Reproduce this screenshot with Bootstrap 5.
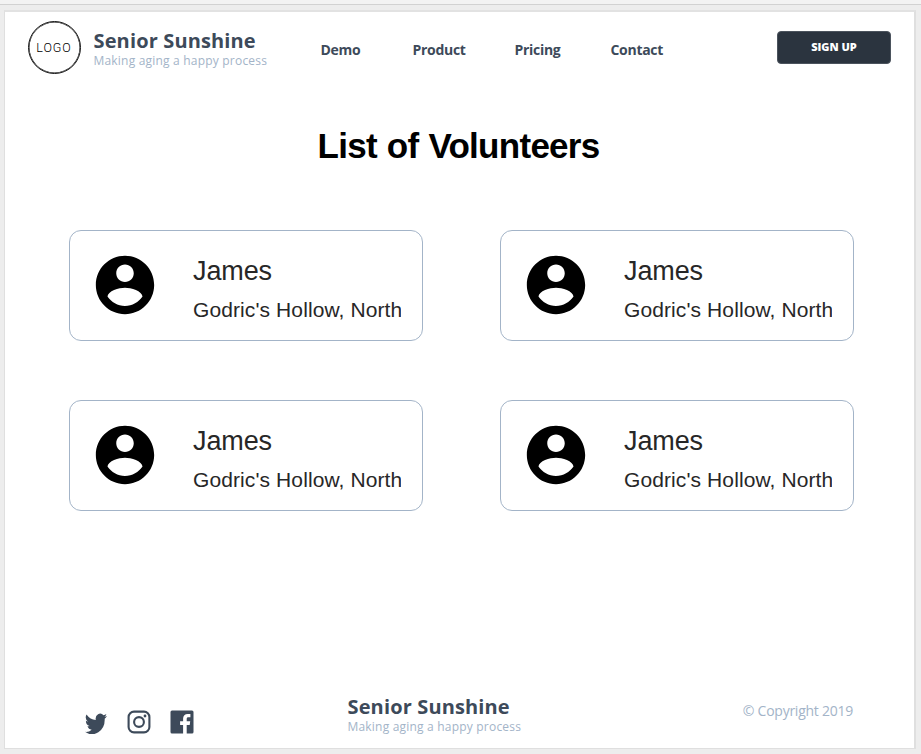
<!DOCTYPE html>
<html lang="en">
<head>
<meta charset="utf-8">
<meta name="viewport" content="width=device-width, initial-scale=1">
<title>Senior Sunshine</title>
<link href="https://cdn.jsdelivr.net/npm/bootstrap@5.3.0/dist/css/bootstrap.min.css" rel="stylesheet">
<style>
  body { background: #ededed; font-family: "Open Sans", sans-serif; color: #3d4a5a; height: 754px; overflow: hidden; }
  .top-strip { height: 5px; background: #f3f3f3; border-bottom: 1px solid #d2d2d2; }
  .page-frame { margin: 5px 5px 0 4px; height: 739px; background: #fff; border: solid #dfdfdf; border-width: 2px 2px 1px 1px; border-top-color: #e2e2e2; }
  .site-header { height: 80px; padding: 9px 23px 0 23px; }
  .logo-disc { width: 53px; height: 53px; border: 1px solid #111; box-shadow: inset 0 0 0 .5px #111; font: 300 12.500px Roboto, sans-serif; letter-spacing: .9px; color: #000; padding-right: 1px; margin-right: 12.500px; }
  .brand-block { width: 227px; padding-top: 9px; }
  .brand-name { font-size: 20px; line-height: 20px; font-weight: 700; letter-spacing: .14px; white-space: nowrap; padding-top: 1px; }
  .brand-line { font-size: 12px; line-height: 16px; color: #a3b4c8; letter-spacing: .2px; white-space: nowrap; padding-top: 2px; }
  .main-links { padding-top: 18px; }
  .main-links a { color: #3d4a5a; font-size: 14px; line-height: 21px; font-weight: 700; letter-spacing: -.3px; }
  .main-links .item-demo { width: 92px; }
  .main-links .item-product { width: 102px; }
  .main-links .item-pricing { width: 96px; }
  .btn-signup { width: 114px; height: 33px; margin-top: 10px; border-radius: 4px; font-size: 11px; font-weight: 800; line-height: 15px; padding-bottom: 2px; background: #2b343f; border: 1px solid #4b535d; color: #fff; }
  .page-title { font: bold 35px/40px "Liberation Sans", Arial, sans-serif; letter-spacing: -.72px; word-spacing: 1px; color: #000; margin: 34px 2px 64px 0; }
  .volunteers { display: grid; grid-template-columns: 354px 354px; gap: 59px 77px; margin-left: 64px; }
  .volunteer { height: 111px; border: 1px solid #a3b4c8; border-radius: 12px; padding: 18.500px 20px 0 20px; font-family: "Liberation Sans", Arial, sans-serif; color: #272727; }
  .volunteer svg { width: 70px; height: 70px; margin-right: 33px; flex: none; }
  .volunteer-name { font-size: 27px; line-height: 32px; margin-top: 5.500px; letter-spacing: -.1px; }
  .volunteer-place { font-size: 21px; line-height: 26px; margin-top: 10px; letter-spacing: .1px; white-space: nowrap; overflow: hidden; width: 208px; }
  .site-footer { padding: 0 61px 0 79px; height: 64px; margin-top: 161px; }
  .socials { gap: 19px; padding-top: 38px; width: 263.500px; }
  .footer-brand { padding-top: 24px; }
  .copyright { font-size: 14px; line-height: 20px; letter-spacing: -.25px; color: #a3b4c8; padding-top: 29px; white-space: nowrap; }
</style>
<script src="https://cdn.jsdelivr.net/npm/bootstrap@5.3.0/dist/js/bootstrap.bundle.min.js"></script>
</head>
<body>
<svg class="d-none"><symbol id="person" viewBox="0 0 24 24"><path d="M12 2C6.480 2 2 6.480 2 12s4.480 10 10 10 10-4.480 10-10S17.520 2 12 2zm0 3c1.660 0 3 1.340 3 3s-1.340 3-3 3-3-1.340-3-3 1.340-3 3-3zm0 14.200c-2.500 0-4.710-1.280-6-3.220.030-1.990 4-3.080 6-3.080 1.990 0 5.970 1.090 6 3.080-1.290 1.940-3.500 3.220-6 3.220z"/></symbol></svg>
<div class="top-strip"></div>
<div class="page-frame">
  <header class="site-header d-flex align-items-start">
    <div class="logo-disc rounded-circle d-flex align-items-center justify-content-center flex-shrink-0">LOGO</div>
    <div class="brand-block">
      <div class="brand-name">Senior Sunshine</div>
      <div class="brand-line">Making aging a happy process</div>
    </div>
    <nav class="nav main-links">
      <a class="item-demo text-decoration-none" href="#">Demo</a>
      <a class="item-product text-decoration-none" href="#">Product</a>
      <a class="item-pricing text-decoration-none" href="#">Pricing</a>
      <a class="text-decoration-none" href="#">Contact</a>
    </nav>
    <button class="btn btn-signup ms-auto px-0 pt-0" type="button">SIGN UP</button>
  </header>
  <main>
    <h1 class="page-title text-center">List of Volunteers</h1>
    <div class="volunteers">
      <article class="volunteer d-flex"><svg><use href="#person"/></svg><div><div class="volunteer-name">James</div><div class="volunteer-place">Godric's Hollow, North</div></div></article>
      <article class="volunteer d-flex"><svg><use href="#person"/></svg><div><div class="volunteer-name">James</div><div class="volunteer-place">Godric's Hollow, North</div></div></article>
      <article class="volunteer d-flex"><svg><use href="#person"/></svg><div><div class="volunteer-name">James</div><div class="volunteer-place">Godric's Hollow, North</div></div></article>
      <article class="volunteer d-flex"><svg><use href="#person"/></svg><div><div class="volunteer-name">James</div><div class="volunteer-place">Godric's Hollow, North</div></div></article>
    </div>
  </main>
  <footer class="site-footer d-flex align-items-start">
    <div class="socials d-flex">
      <svg width="24" height="24" viewBox="0 0 24 24" fill="#3d4a5a"><path d="M23 5.100a9 9 0 0 1-2.600.700 4.500 4.500 0 0 0 2-2.500 9 9 0 0 1-2.900 1.100 4.500 4.500 0 0 0-7.700 4.100A12.800 12.800 0 0 1 2.500 3.800a4.500 4.500 0 0 0 1.400 6 4.500 4.500 0 0 1-2-.600 4.500 4.500 0 0 0 3.600 4.500 4.500 4.500 0 0 1-2 .1 4.500 4.500 0 0 0 4.200 3.100A9 9 0 0 1 1 18.800 12.800 12.800 0 0 0 20.700 7.400 9 9 0 0 0 23 5.100z" transform="translate(0 .2) scale(1 1.150)"/></svg>
      <svg width="24" height="24" viewBox="0 0 24 24" fill="none" stroke="#3d4a5a" stroke-width="2.100"><rect x="1.600" y="1.600" width="20.800" height="20.800" rx="5.400"/><circle cx="12" cy="12" r="4.900"/><circle cx="18" cy="6" r="1.400" fill="#3d4a5a" stroke="none"/></svg>
      <svg width="24" height="24" viewBox="0 0 24 24" fill="#3d4a5a"><path d="M2 .5h20a1.500 1.500 0 0 1 1.500 1.500v20a1.500 1.500 0 0 1-1.500 1.500h-5.300v-8.600h3l.5-3.600h-3.500V9c0-1.100.4-1.700 1.800-1.700h1.900V4.100a22 22 0 0 0-2.700-.2c-2.800 0-4.600 1.700-4.600 4.700v2.700h-3v3.600h3v8.600H2A1.500 1.500 0 0 1 .5 22V2A1.500 1.500 0 0 1 2 .5z"/></svg>
    </div>
    <div class="brand-block footer-brand">
      <div class="brand-name">Senior Sunshine</div>
      <div class="brand-line">Making aging a happy process</div>
    </div>
    <div class="copyright ms-auto">© Copyright 2019</div>
  </footer>
</div>
</body>
</html>
